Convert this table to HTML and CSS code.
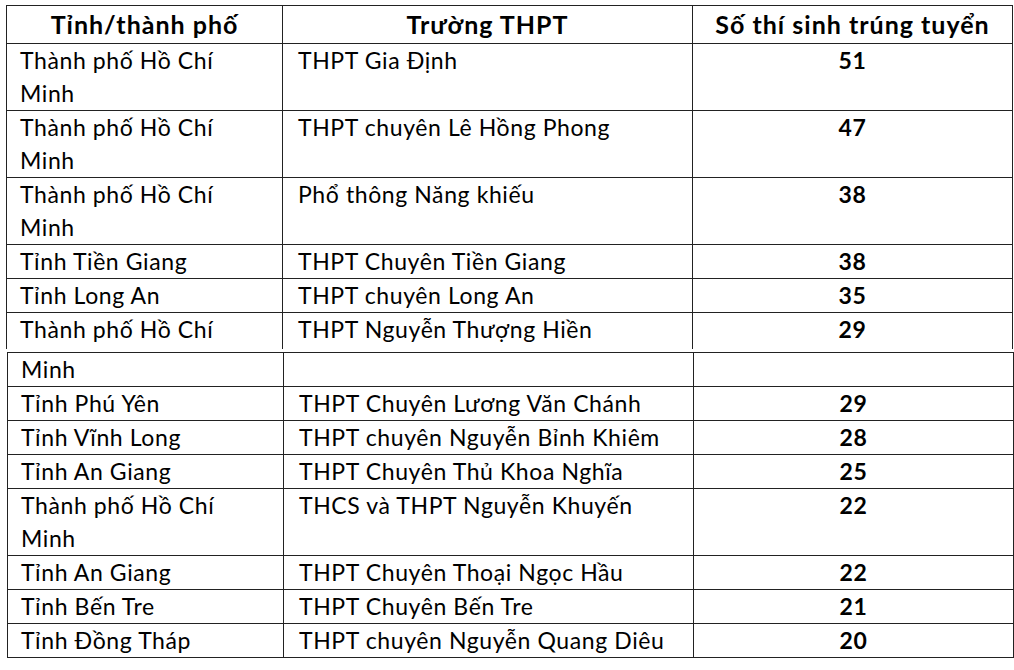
FILE: index.html
```html
<!DOCTYPE html>
<html lang="vi">
<head>
<meta charset="utf-8">
<title>Số thí sinh trúng tuyển</title>
<link rel="stylesheet" href="styles.css">
</head>
<body>
<table class="tbl tbl-top">
  <colgroup><col class="c1"><col class="c2"><col class="c3"></colgroup>
  <thead>
    <tr class="head"><th>Tỉnh/thành phố</th><th>Trường THPT</th><th>Số thí sinh trúng tuyển</th></tr>
  </thead>
  <tbody>
    <tr><td class="prov">Thành phố Hồ Chí<br>Minh</td><td class="school">THPT Gia Định</td><td class="num">51</td></tr>
    <tr><td class="prov">Thành phố Hồ Chí<br>Minh</td><td class="school">THPT chuyên Lê Hồng Phong</td><td class="num">47</td></tr>
    <tr><td class="prov">Thành phố Hồ Chí<br>Minh</td><td class="school">Phổ thông Năng khiếu</td><td class="num">38</td></tr>
    <tr><td class="prov">Tỉnh Tiền Giang</td><td class="school">THPT Chuyên Tiền Giang</td><td class="num">38</td></tr>
    <tr><td class="prov">Tỉnh Long An</td><td class="school">THPT chuyên Long An</td><td class="num">35</td></tr>
    <tr class="split"><td class="prov">Thành phố Hồ Chí</td><td class="school">THPT Nguyễn Thượng Hiền</td><td class="num">29</td></tr>
  </tbody>
</table>
<table class="tbl tbl-bottom">
  <colgroup><col class="c1"><col class="c2"><col class="c3"></colgroup>
  <tbody>
    <tr><td class="prov">Minh</td><td class="school"></td><td class="num"></td></tr>
    <tr><td class="prov">Tỉnh Phú Yên</td><td class="school">THPT Chuyên Lương Văn Chánh</td><td class="num">29</td></tr>
    <tr><td class="prov">Tỉnh Vĩnh Long</td><td class="school">THPT chuyên Nguyễn Bỉnh Khiêm</td><td class="num">28</td></tr>
    <tr><td class="prov">Tỉnh An Giang</td><td class="school">THPT Chuyên Thủ Khoa Nghĩa</td><td class="num">25</td></tr>
    <tr><td class="prov">Thành phố Hồ Chí<br>Minh</td><td class="school">THCS và THPT Nguyễn Khuyến</td><td class="num">22</td></tr>
    <tr><td class="prov">Tỉnh An Giang</td><td class="school">THPT Chuyên Thoại Ngọc Hầu</td><td class="num">22</td></tr>
    <tr><td class="prov">Tỉnh Bến Tre</td><td class="school">THPT Chuyên Bến Tre</td><td class="num">21</td></tr>
    <tr><td class="prov">Tỉnh Đồng Tháp</td><td class="school">THPT chuyên Nguyễn Quang Diêu</td><td class="num">20</td></tr>
  </tbody>
</table>
</body>
</html>
```
FILE: styles.css
```css
html, body {
  margin: 0;
  padding: 0;
  background: #ffffff;
}
body {
  padding: 5px 0 0 6px;
  font-family: Lato, "Liberation Sans", sans-serif;
  font-size: 23px;
  letter-spacing: 0.6px;
  color: #000;
}
.tbl {
  border-collapse: collapse;
  table-layout: fixed;
  width: 1006px;
}
.c1 { width: 276px; }
.c2 { width: 410px; }
.c3 { width: 320px; }
.tbl th, .tbl td {
  border: 1px solid #222;
  padding: 0;
  line-height: 33px;
  vertical-align: top;
  text-align: left;
  white-space: nowrap;
}
.tbl th {
  font-weight: 700;
  font-size: 25px;
  letter-spacing: 1px;
  text-align: center;
  line-height: 37px;
}
.prov { padding-left: 13px !important; }
.school { padding-left: 15px !important; }
.num { text-align: center !important; font-weight: 700; }
.tbl-top .split td {
  border-bottom: none;
  height: 36px;
}
.tbl-top {
  margin-bottom: 3px;
}
.tbl-bottom {
  margin-left: 1px;
}
```
